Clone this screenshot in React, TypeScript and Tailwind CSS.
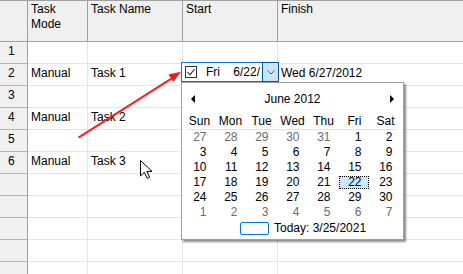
import React from "react";

type Row = { n: string; mode: string; name: string; finish: string };

const rows: Row[] = [
  { n: "1", mode: "", name: "", finish: "" },
  { n: "2", mode: "Manual", name: "Task 1", finish: "Wed 6/27/2012" },
  { n: "3", mode: "", name: "", finish: "" },
  { n: "4", mode: "Manual", name: "Task 2", finish: "" },
  { n: "5", mode: "", name: "", finish: "" },
  { n: "6", mode: "Manual", name: "Task 3", finish: "" },
  { n: "", mode: "", name: "", finish: "" },
  { n: "", mode: "", name: "", finish: "" },
  { n: "", mode: "", name: "", finish: "" },
  { n: "", mode: "", name: "", finish: "" },
  { n: "", mode: "", name: "", finish: "" },
];

const dayNames = ["Sun", "Mon", "Tue", "Wed", "Thu", "Fri", "Sat"];

// [label, outside current month]
const weeks: [string, boolean][][] = [
  [["27", true], ["28", true], ["29", true], ["30", true], ["31", true], ["1", false], ["2", false]],
  [["3", false], ["4", false], ["5", false], ["6", false], ["7", false], ["8", false], ["9", false]],
  [["10", false], ["11", false], ["12", false], ["13", false], ["14", false], ["15", false], ["16", false]],
  [["17", false], ["18", false], ["19", false], ["20", false], ["21", false], ["22", false], ["23", false]],
  [["24", false], ["25", false], ["26", false], ["27", false], ["28", false], ["29", false], ["30", false]],
  [["1", true], ["2", true], ["3", true], ["4", true], ["5", true], ["6", true], ["7", true]],
];

function Calendar() {
  return (
    <div className="absolute left-[181px] top-[82px] w-[223px] h-[158px] bg-white border border-[#a0a0a0] shadow-[2px_2px_2px_rgba(0,0,0,0.45)] px-[2px]">
      {/* month nav */}
      <div className="mt-[8px] h-[16px] flex items-center justify-between px-[7px]">
        <div className="w-0 h-0 border-y-[4px] border-y-transparent border-r-[4px] border-r-black"></div>
        <span>June 2012</span>
        <div className="w-0 h-0 border-y-[4px] border-y-transparent border-l-[4px] border-l-black"></div>
      </div>

      <div className="mt-[7px] grid grid-cols-7 h-[15px] leading-[15px]">
        {dayNames.map((d) => (
          <div key={d} className="text-center">{d}</div>
        ))}
      </div>
      <div className="ml-[3px] mr-[4px] border-b border-[#e3e3e3]"></div>

      {weeks.map((w, i) => (
        <div key={i} className="grid grid-cols-7 h-[15px] leading-[15px]">
          {w.map(([d, other], j) => {
            const sel = i === 3 && j === 5;
            return (
              <div key={j} className="relative flex justify-center">
                {sel && (
                  <div className="absolute left-0 right-[1px] top-[1px] bottom-[1px] bg-[#cce8ff] border border-dotted border-black"></div>
                )}
                <span className={`relative w-[14px] text-right ${other ? "text-[#6d6d6d]" : "text-black"}`}>{d}</span>
              </div>
            );
          })}
        </div>
      ))}

      <div className="h-[16px] flex items-center pl-[56px] gap-[5px]">
        <div className="w-[29px] h-[13px] rounded-[2px] border border-[#0078d7]"></div>
        <span>Today: 3/25/2021</span>
      </div>
    </div>
  );
}

function DateEditor() {
  return (
    <div className="absolute left-[181px] top-[62px] w-[98px] h-[20px] flex bg-white">
      <div className="flex-1 flex items-center border border-r-0 border-[#0078d7] pl-[3px] pr-[2px]">
        <div className="w-[12px] h-[12px] border border-[#333] flex items-center justify-center">
          <svg width="10" height="10" viewBox="0 0 10 10">
            <path d="M1.5 5.2 L4 7.6 L8.6 2.2" fill="none" stroke="#333" strokeWidth="1.1" />
          </svg>
        </div>
        <span className="ml-[9px]">Fri</span>
        <span className="ml-auto">6/22/</span>
      </div>
      <div className="w-[17px] border border-[#005499] bg-[#cce4f7] flex items-center justify-center">
        <svg width="8" height="5" viewBox="0 0 8 5">
          <path d="M0.5 0.5 L4 4 L7.5 0.5" fill="none" stroke="#555" strokeWidth="1" />
        </svg>
      </div>
    </div>
  );
}

function Overlays() {
  return (
    <svg className="absolute inset-0 pointer-events-none" width="463" height="274">
      {/* red pointer arrow */}
      <line x1="79.5" y1="138.5" x2="172.5" y2="79.5" stroke="rgba(0,0,0,0.18)" strokeWidth="2" />
      <line x1="78.5" y1="137.5" x2="171.5" y2="78.5" stroke="#ec1c1c" strokeWidth="2" />
      <polygon points="181,71.7 168.5,74.4 173.3,82" fill="#ec1c1c" />
      {/* mouse cursor */}
      <path
        d="M140.5 160.5 L140.5 176 L144.3 172.4 L147.2 178.3 L149.6 177.2 L146.8 171.4 L152 171.4 Z"
        fill="#fff"
        stroke="#000"
        strokeWidth="1"
        strokeLinejoin="round"
      />
    </svg>
  );
}

export default function App() {
  return (
    <div className="relative w-[463px] h-[274px] overflow-hidden bg-white text-[12px] leading-[15px] text-black font-['Liberation_Sans',Arial,sans-serif]">
      {/* header */}
      <div className="flex h-[42px] bg-[#f0f0f0] border-t border-b border-[#a0a0a0]">
        <div className="w-[28px] border-r border-[#a0a0a0]"></div>
        <div className="w-[60px] border-r border-[#a0a0a0] pl-[3px] pt-[1px]">Task<br />Mode</div>
        <div className="w-[95px] border-r border-[#a0a0a0] pl-[3px] pt-[1px]">Task Name</div>
        <div className="w-[95px] border-r border-[#a0a0a0] pl-[3px] pt-[1px]">Start</div>
        <div className="flex-1 pl-[3px] pt-[1px]">Finish</div>
      </div>

      {rows.map((r, i) => (
        <div key={i} className="flex h-[22px]">
          <div className="w-[28px] bg-[#f0f0f0] border-r border-b border-r-[#a0a0a0] border-b-[#b4b4b4] pl-[8px] pt-[2px]">{r.n}</div>
          <div className="w-[60px] border-r border-b border-[#e6e6e6] pl-[3px] pt-[2px]">{r.mode}</div>
          <div className="w-[95px] border-r border-b border-[#e6e6e6] pl-[3px] pt-[2px]">{r.name}</div>
          <div className="w-[95px] border-r border-b border-[#e6e6e6] pl-[3px] pt-[2px]"></div>
          <div className="flex-1 border-b border-[#e6e6e6] pl-[3px] pt-[2px]">{r.finish}</div>
        </div>
      ))}

      <DateEditor />
      <Calendar />
      <Overlays />
    </div>
  );
}
